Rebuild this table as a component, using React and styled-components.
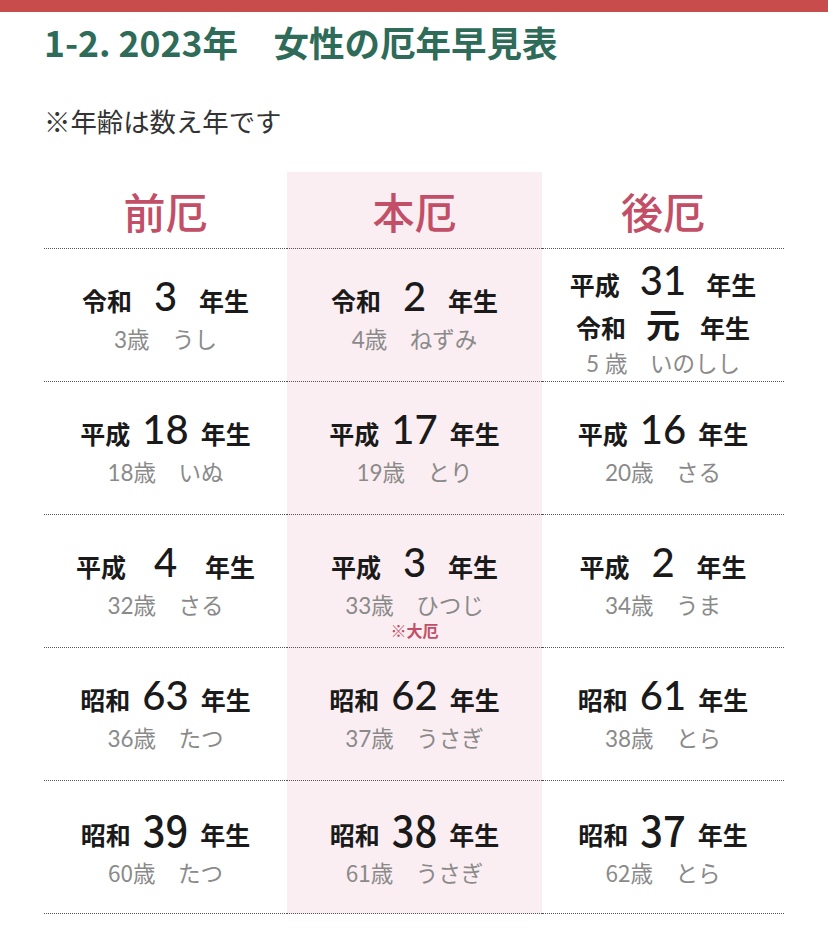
import React from "react";
import styled, { createGlobalStyle } from "styled-components";

const GlobalStyle = createGlobalStyle`
  html, body { margin: 0; padding: 0; background: #fff; }
  body { font-family: "Noto Sans CJK JP", "Noto Sans", sans-serif; color: #222; }
`;

const TopBar = styled.div`
  height: 12px;
  background: #c94c4c;
`;

const Page = styled.div`
  padding: 0 44px 40px;
`;

const Title = styled.h2`
  margin: 7px 0 0;
  font-size: 35.5px;
  line-height: 46px;
  font-weight: 700;
  color: #2e6b58;
  letter-spacing: 0;
  white-space: pre;
`;

const Note = styled.p`
  margin: 38px 0 0;
  font-size: 26.4px;
  line-height: 36px;
  color: #333;
  font-weight: 400;
`;

const Table = styled.div`
  margin-top: 33px;
  width: 740px;
  display: grid;
  grid-template-columns: 243px 255px 242px;
`;

const HeadCell = styled.div`
  height: 76px;
  border-bottom: 1px dotted #555;
  background: ${(p) => (p.$main ? "#fbeef2" : "transparent")};
  display: flex;
  align-items: center;
  justify-content: center;
  font-size: 42px;
  font-weight: 500;
  color: #c24f67;
`;

const Cell = styled.div`
  height: ${(p) => (p.$compact ? 120 : 128)}px;
  padding-top: ${(p) => (p.$compact ? 12 : 4)}px;
  border-bottom: 1px dotted #555;
  background: ${(p) => (p.$main ? "#fbeef2" : "transparent")};
  display: flex;
  flex-direction: column;
  align-items: center;
  justify-content: center;
`;

const MainLine = styled.div`
  display: flex;
  align-items: baseline;
  gap: ${(p) => p.$gap}px;
  height: ${(p) => (p.$compact ? 43 : 46)}px;
  line-height: ${(p) => (p.$compact ? 43 : 46)}px;
`;

const Era = styled.span`
  font-size: 25px;
  font-weight: 700;
  color: #1a1a1a;
`;

const Num = styled.span`
  font-size: ${(p) => (p.$kanji ? 34 : 40)}px;
  font-weight: ${(p) => (p.$kanji ? 700 : 500)};
  color: #1a1a1a;
  font-family: ${(p) =>
    p.$narrow || p.$kanji ? '"Noto Sans CJK JP", sans-serif' : 'Lato, "Noto Sans", sans-serif'};
  ${(p) => (p.$narrow ? "transform: scaleY(1.1); display: inline-block;" : "")}
`;

const Sub = styled.div`
  font-size: 22.5px;
  line-height: ${(p) => (p.$compact ? 38 : 42)}px;
  color: #8a8a8a;
  font-family: ${(p) =>
    p.$narrow ? '"Noto Sans CJK JP", sans-serif' : 'Lato, "Noto Sans CJK JP", sans-serif'};
  white-space: pre;
`;

const Daiyaku = styled.div`
  font-size: 16px;
  line-height: 22px;
  font-weight: 700;
  color: #c24f67;
  margin-top: -8px;
  margin-bottom: -14px;
`;

const columns = ["前厄", "本厄", "後厄"];

const rows = [
  [
    { lines: [["令和", "3"]], sub: "3歳　うし", gap: 22 },
    { lines: [["令和", "2"]], sub: "4歳　ねずみ", gap: 22 },
    { lines: [["平成", "31"], ["令和", "元", true]], sub: "5 歳　いのしし", gap: 20, compact: true },
  ],
  [
    { lines: [["平成", "18"]], sub: "18歳　いぬ", gap: 12 },
    { lines: [["平成", "17"]], sub: "19歳　とり", gap: 12 },
    { lines: [["平成", "16"]], sub: "20歳　さる", gap: 12 },
  ],
  [
    { lines: [["平成", "4"]], sub: "32歳　さる", gap: 28 },
    { lines: [["平成", "3"]], sub: "33歳　ひつじ", gap: 22, daiyaku: true },
    { lines: [["平成", "2"]], sub: "34歳　うま", gap: 22 },
  ],
  [
    { lines: [["昭和", "63"]], sub: "36歳　たつ", gap: 12 },
    { lines: [["昭和", "62"]], sub: "37歳　うさぎ", gap: 12 },
    { lines: [["昭和", "61"]], sub: "38歳　とら", gap: 12 },
  ],
  [
    { lines: [["昭和", "39"]], sub: "60歳　たつ", gap: 12, narrow: true },
    { lines: [["昭和", "38"]], sub: "61歳　うさぎ", gap: 12, narrow: true },
    { lines: [["昭和", "37"]], sub: "62歳　とら", gap: 12, narrow: true },
  ],
];

export default function App() {
  return (
    <>
      <GlobalStyle />
      <TopBar />
      <Page>
        <Title>{"1-2. 2023年　女性の厄年早見表"}</Title>
        <Note>※年齢は数え年です</Note>
        <Table>
          {columns.map((c, i) => (
            <HeadCell key={c} $main={i === 1}>
              {c}
            </HeadCell>
          ))}
          {rows.map((row, ri) =>
            row.map((cell, ci) => (
              <Cell key={`${ri}-${ci}`} $main={ci === 1} $compact={cell.compact}>
                {cell.lines.map(([era, num, kanji], li) => (
                  <MainLine key={li} $gap={cell.gap} $compact={cell.compact}>
                    <Era>{era}</Era>
                    <Num $kanji={kanji} $narrow={cell.narrow}>
                      {num}
                    </Num>
                    <Era>年生</Era>
                  </MainLine>
                ))}
                <Sub $narrow={cell.narrow} $compact={cell.compact}>
                  {cell.sub}
                </Sub>
                {cell.daiyaku && <Daiyaku>※大厄</Daiyaku>}
              </Cell>
            ))
          )}
        </Table>
      </Page>
    </>
  );
}
